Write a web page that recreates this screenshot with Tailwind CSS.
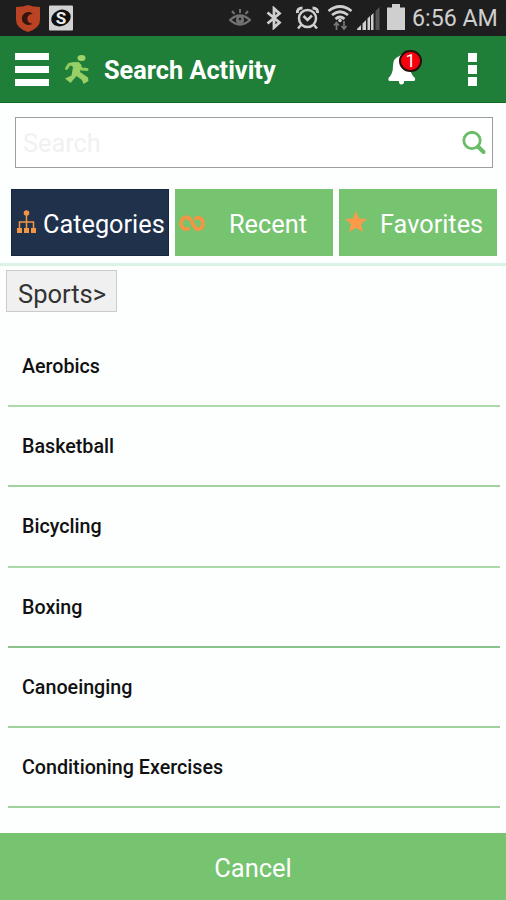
<!DOCTYPE html>
<html lang="en">
<head>
  <meta charset="UTF-8" />
  <meta name="viewport" content="width=device-width, initial-scale=1.0"/>
  <title>Search Activity</title>
  <script src="https://cdn.jsdelivr.net/npm/@tailwindcss/browser@4"></script>
</head>
<body class="bg-[#fdfefe] w-[506px] h-[900px] overflow-hidden flex flex-col font-[Roboto,sans-serif]">

  <!-- Status bar -->
  <div class="h-9 shrink-0 bg-[#1e1e1e] flex items-center pl-4 pr-2">
    <svg class="w-6 h-[27px] shrink-0" viewBox="0 0 24 27">
      <path d="M0 2Q7 2 12 0Q17 2 24 2V15Q24 23 12 27Q0 23 0 15Z" fill="#b94322"/>
      <path d="M17 9A6.500 6.500 0 1 0 16.500 18.500A4.800 4.800 0 1 1 17 9Z" fill="#35150e"/>
    </svg>
    <svg class="ml-[9px] w-6 h-[26px] shrink-0" viewBox="0 0 24 26">
      <rect y=".5" width="24" height="25" rx="1" fill="#d2d2d2"/>
      <ellipse cx="12" cy="13" rx="10" ry="8" fill="#111" transform="rotate(-25 12 13)"/>
      <text x="12" y="19" text-anchor="middle" font-family="Roboto" font-size="17" font-weight="700" fill="#eee">S</text>
    </svg>
    <svg class="ml-[156px] -mt-0.5 w-[22px] h-[19px] shrink-0" viewBox="0 0 22 19" fill="none" stroke="#717171">
      <path d="M1 12Q11 3 21 12Q11 21 1 12Z" stroke-width="2.300"/>
      <circle cx="11" cy="12" r="4" fill="#717171" stroke="none"/>
      <circle cx="11" cy="11" r="1.200" fill="#1e1e1e" stroke="none"/>
      <path d="M11 1V5M3 3L5.500 6M19 3L16.500 6" stroke-width="2"/>
    </svg>
    <svg class="ml-[15px] w-4 h-6 shrink-0" viewBox="0 0 16 24" fill="none" stroke="#cfcfcf" stroke-width="2.800">
      <path d="M1.500 6.500L13.500 16.500L8 21.500V2.500L13.500 7.500L1.500 17.500"/>
    </svg>
    <svg class="ml-3.5 w-[23px] h-6 shrink-0" viewBox="0 0 23 24" fill="none" stroke="#cfcfcf" stroke-width="2.500">
      <circle cx="11.500" cy="12.500" r="8.500"/>
      <path d="M7.500 10L11.500 14L16 9.500M5 19L2 22.500M18 19L21 22.500" />
      <path d="M1.500 7Q1 2 6.500 2M21.500 7Q22 2 16.500 2" stroke-width="3"/>
    </svg>
    <svg class="ml-2 -mt-0.5 w-[26px] h-[25px] shrink-0" viewBox="0 0 26 25" fill="none" stroke="#cfcfcf">
      <path d="M1.500 6Q13-3 24.500 6M5 10Q13 3.500 21 10M8.500 14Q13 10 17.500 14" stroke-width="2.700"/>
      <circle cx="13" cy="15.500" r="1.800" fill="#cfcfcf" stroke="none"/>
      <path d="M9.500 25V18M7 20.500L9.500 17.500L12 20.500M17 16V23.500M14.500 21L17 24L19.500 21" stroke="#777" stroke-width="1.700"/>
    </svg>
    <svg class="ml-1 w-[23px] h-[23px] shrink-0" viewBox="0 0 23 23">
      <path d="M0 23V22L4 18V23ZM5.500 23V16.500L9 13V23ZM10.500 23V11.500L13 9V23ZM14 23V8.500L16.500 6V23Z" fill="#cfcfcf"/>
      <path d="M18.500 23V4L22.500 0V23Z" fill="#555"/>
    </svg>
    <svg class="ml-[7px] -mt-0.5 w-[18px] h-[26px] shrink-0" viewBox="0 0 18 26">
      <path d="M5 0H13V3.500H18V26H0V3.500H5Z" fill="#cfcfcf"/>
    </svg>
    <span class="ml-[7px] -mt-px text-[23.200px] leading-9 text-[#cfcfcf] whitespace-nowrap">6:56 AM</span>
  </div>

  <!-- App bar -->
  <div class="h-[67px] shrink-0 bg-[#1f7f39] border-b border-[#0b6e1c] flex items-center pl-[15px] pr-[29px]">
    <div class="w-[34px] flex flex-col gap-[6px]">
      <div class="h-[7px] bg-white"></div>
      <div class="h-[7px] bg-white"></div>
      <div class="h-[7px] bg-white"></div>
    </div>
    <svg class="ml-[15px] mt-0.5 w-[26px] h-[30px]" viewBox="0 0 26 30">
      <ellipse cx="17.500" cy="3" rx="4" ry="2.900" fill="#9fd468"/>
      <path d="M2.500 13.500L5 9.500L11 8.500M14.500 9.500L17.500 14L23 14.500" fill="none" stroke="#8fca60" stroke-width="3" stroke-linejoin="round" stroke-linecap="round"/>
      <path d="M5 8L14.500 7L17.500 10L16 17L24 22.500L24.500 26L19.500 29L18 25L12.500 21L6.500 28L1 23.500L7.500 20.500L9 12Z" fill="#98cf66"/>
    </svg>
    <h1 class="ml-3.5 mt-[3px] text-[25.300px] leading-8 font-bold text-white whitespace-nowrap">Search Activity</h1>
    <div class="relative ml-auto w-7 h-[31px]">
      <svg class="w-7 h-[31px]" viewBox="0 0 28 31" fill="#fff">
        <path d="M11.500 2Q13.500-1 15.500 2Q22 4 22 12Q22 20 27 24Q27.500 27 26 27H1.500Q0 27 .5 24Q5 20 5 12Q5 4 11.500 2Z"/>
        <path d="M11 27H16V29Q13.500 32 11 29Z"/>
      </svg>
      <span class="absolute -top-1 left-[11px] w-[23px] h-[22px] rounded-full bg-[#f5000c] border-2 border-[#24110c] text-white text-[18px] leading-[18px] text-center">1</span>
    </div>
    <div class="ml-[52px] w-[9px] flex flex-col gap-[3px]">
      <div class="h-[9px] bg-white"></div>
      <div class="h-[9px] bg-white"></div>
      <div class="h-[9px] bg-white"></div>
    </div>
  </div>

  <!-- Search field -->
  <div class="mt-3.5 ml-[15px] w-[478px] h-[51px] shrink-0 bg-white border border-[#9b9da0] flex items-center justify-between pl-[7px] pr-1.5">
    <span class="mt-[3px] text-[25.300px] leading-8 text-[#f1f1f1]">Search</span>
    <svg class="w-6 h-6" viewBox="0 0 24 24" fill="none" stroke="#6abd68">
      <circle cx="10" cy="9.500" r="8.200" stroke-width="2.800"/>
      <path d="M16 15.500L21.500 21" stroke-width="4" stroke-linecap="round"/>
    </svg>
  </div>

  <!-- Tabs -->
  <div class="mt-[21px] h-[67px] shrink-0 flex gap-1.5 pl-[11px] text-[25.300px] text-white">
    <div class="w-[158px] bg-[#20314c] border border-[#162740] flex items-center">
      <svg class="ml-[5px] -mt-0.5 w-[19px] h-[23px] shrink-0" viewBox="0 0 19 23" fill="#f29545">
        <circle cx="9.500" cy="3" r="2.800"/>
        <path d="M9.500 4V19M2.500 19V12H16.500V19" fill="none" stroke="#f29545" stroke-width="1.500"/>
        <path d="M0 18H5V23H0ZM7 18H12V23H7ZM14 18H19V23H14Z"/>
      </svg>
      <span class="ml-[7px] mt-[5px]">Categories</span>
    </div>
    <div class="w-[158px] bg-[#76c370] flex items-center">
      <svg class="ml-1 mt-0.5 w-[26px] h-[17px] shrink-0" viewBox="0 0 26 17" fill="none" stroke="#f29545" stroke-width="3.700">
        <path d="M10.500 13C6 15.500 2 13 2 8.500C2 3 8 0 11.500 4.500L15 11C18 16.500 24 14.500 24 8.500C24 3.500 20 1.500 15.500 4"/>
      </svg>
      <span class="ml-6 mt-[5px]">Recent</span>
    </div>
    <div class="w-[158px] bg-[#76c370] flex items-center">
      <svg class="ml-1.5 -mt-0.5 w-[22px] h-[21px] shrink-0" viewBox="0 0 22 21" fill="#fb9a48">
        <path d="M11 0L14 7.500L22 8L16 13L18 21L11 16.700L4 21L6 13L0 8L8 7.500Z"/>
      </svg>
      <span class="ml-[13px] mt-[5px]">Favorites</span>
    </div>
  </div>
  <div class="mt-[7px] h-[3px] shrink-0 bg-[#daf3e4]"></div>

  <!-- Breadcrumb -->
  <div class="mt-1 ml-1.5 w-[111px] h-[42px] shrink-0 bg-[#f0f0f0] border border-[#cbcbcb] pl-[11px] pt-1 text-[25.500px] leading-[38px] text-[#333]">Sports&gt;</div>

  <!-- Activity list -->
  <ul class="mt-[15px] mx-2 w-[492px] shrink-0 text-[19.700px] font-medium text-[#111]">
    <li class="h-[80.200px] border-b-2 border-[#acd9aa] pl-3.5 leading-[79px]">Aerobics</li>
    <li class="h-[80.200px] border-b-2 border-[#9fd29c] pl-3.5 leading-[79px]">Basketball</li>
    <li class="h-[80.200px] border-b-2 border-[#acd9aa] pl-3.5 leading-[79px]">Bicycling</li>
    <li class="h-[80.200px] border-b-2 border-[#8bc48a] pl-3.5 leading-[79px]">Boxing</li>
    <li class="h-[80.200px] border-b-2 border-[#9fd29c] pl-3.5 leading-[79px]">Canoeinging</li>
    <li class="h-[80.200px] border-b-2 border-[#9fd29c] pl-3.5 leading-[79px]">Conditioning Exercises</li>
  </ul>

  <button class="mt-auto h-[67px] shrink-0 bg-[#76c370] text-white text-[25.500px] pt-1">Cancel</button>
</body>
</html>
